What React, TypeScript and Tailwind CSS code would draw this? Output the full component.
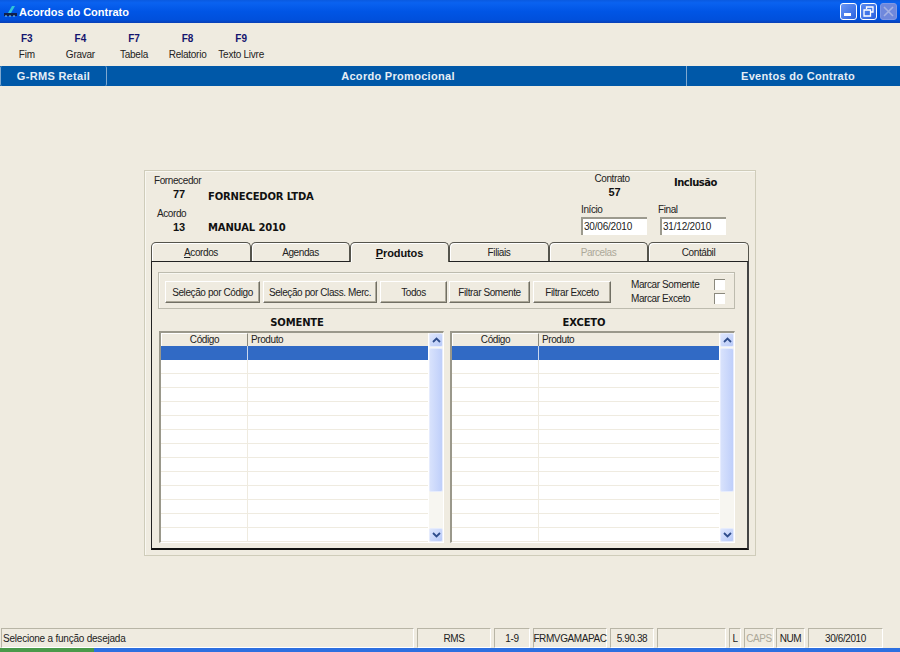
import React from "react";

const font = "font-['Liberation_Sans',Arial,sans-serif]";
const bold = "font-['DejaVu_Sans',sans-serif] font-bold";
const barBold = "font-['Liberation_Sans',Arial,sans-serif] font-bold tracking-[0.3px]";

const keys = [
  ["F3", "Fim"],
  ["F4", "Gravar"],
  ["F7", "Tabela"],
  ["F8", "Relatorio"],
  ["F9", "Texto Livre"],
];

function Btn({ w, label, mr }: { w: string; label: string; mr: string }) {
  return (
    <div
      className={`${w} ${mr} h-[22px] flex items-center justify-center whitespace-nowrap text-[10px] text-[#222] bg-[#efebe0] border border-t-white border-l-white border-r-[#716f64] border-b-[#716f64] shadow-[inset_-1px_-1px_0_#aca899]`}
    >
      {label}
    </div>
  );
}

function Tab({ w, label, active, disabled, u }: { w: string; label: string; active?: boolean; disabled?: boolean; u?: string }) {
  const rest = u ? label.slice(1) : label;
  return (
    <div
      className={`${w} relative z-10 flex items-center justify-center rounded-t-[5px] border-t border-l border-r border-[#55544c] shadow-[inset_1px_1px_0_#ffffff] text-[10px] ${
        active
          ? "h-[20px] -mb-[1px] bg-[#efebe0] font-bold text-[11px] tracking-[-0.1px] text-[#111] pt-[1px]"
          : disabled
          ? "h-[19px] bg-[#efebe0] text-[#aca899]"
          : "h-[19px] bg-[#efebe0] text-[#222]"
      }`}
    >
      {u ? <span className="underline">{u}</span> : null}
      {rest}
    </div>
  );
}

function ListBox({ title, mr, pr }: { title: string; mr: string; pr: string }) {
  const rows = Array.from({ length: 13 });
  return (
    <div className={`w-[285px] ${mr} flex flex-col`}>
      <div className={`h-[18px] ${pr} flex items-center justify-center text-[10px] ${bold} text-[#111] tracking-[-0.15px]`}>{title}</div>
      <div className="h-[212px] border-t-2 border-l-2 border-t-[#9a988b] border-l-[#9a988b] border-r border-b border-r-white border-b-white flex bg-white">
        <div className="w-[269px] flex flex-col">
          <div className="h-[13px] flex bg-[#efebe0] text-[10px] leading-[13px] text-[#222]">
            <div className="w-[87px] text-center border-t border-l border-white border-r border-r-[#8b897d] leading-[12px]">Código</div>
            <div className="flex-1 pl-[3px]">Produto</div>
          </div>
          <div className="h-[14px] flex bg-[#316ac5] shrink-0">
            <div className="w-[87px] border-r border-[#c9d6ee]" />
          </div>
          {rows.map((_, i) => (
            <div key={i} className="h-[14px] shrink-0 flex border-b border-[#efebe0]">
              <div className="w-[87px] border-r border-[#efebe0]" />
            </div>
          ))}
        </div>
        <div className="w-[14px] ml-[1px] flex flex-col bg-[#f7f6f1]">
          <ScrollBtn dir="up" />
          <div className="h-[144px] mt-[1px] bg-[linear-gradient(90deg,#d8e2fc,#bfcffa)] border border-[#e6ecfd] rounded-[2px]" />
          <div className="flex-1" />
          <ScrollBtn dir="down" />
        </div>
      </div>
    </div>
  );
}

function ScrollBtn({ dir }: { dir: "up" | "down" }) {
  return (
    <div className="h-[14px] bg-[linear-gradient(135deg,#dfe7fd,#b7c9f8)] border border-[#e6ecfd] rounded-[2px] flex items-center justify-center">
      <svg width="9" height="6" viewBox="0 0 9 6">
        <path d={dir === "up" ? "M1 5L4.5 1.5L8 5" : "M1 1L4.5 4.5L8 1"} fill="none" stroke="#2f4d8c" strokeWidth="1.8" />
      </svg>
    </div>
  );
}

function Cell({ w, mr, children, cls }: { w: string; mr: string; children?: React.ReactNode; cls?: string }) {
  return (
    <div className={`${w} ${mr} h-[20px] flex items-center justify-center whitespace-nowrap border-t border-l border-[#b8b5a6] border-r border-r-white border-b border-b-white text-[10px] ${cls ?? "text-[#222]"}`}>
      {children}
    </div>
  );
}

export default function App() {
  return (
    <div className={`w-[900px] h-[652px] overflow-hidden flex flex-col bg-[#efebe0] ${font} text-[#222] tracking-[-0.4px]`}>
      {/* title bar */}
      <div className="h-[23px] shrink-0 flex items-center bg-[linear-gradient(180deg,#0a5ae0_0%,#0a62f0_12%,#0055e5_50%,#0050dc_85%,#0a3fb5_100%)]">
        <svg className="ml-[2px]" width="16" height="14" viewBox="0 0 16 14">
          <path d="M6 8L10 1L13 1L9 8Z" fill="#2fc4d8" />
          <rect x="2" y="8" width="13" height="3" fill="#10204a" />
          <path d="M3 11H5M7 11H9M11 11H13" stroke="#8fd0e8" strokeWidth="1" />
        </svg>
        <span className="ml-[1px] pt-[1px] text-[11px] text-white font-bold tracking-normal">Acordos do Contrato</span>
        <div className="ml-auto mr-[3px] flex gap-[3px]">
          <div className="w-[17px] h-[17px] rounded-[3px] border border-white bg-[linear-gradient(135deg,#6a97f5,#2a62e0)] flex items-end pl-[3px] pb-[3px]">
            <div className="w-[7px] h-[3px] bg-white" />
          </div>
          <div className="w-[17px] h-[17px] rounded-[3px] border border-white bg-[linear-gradient(135deg,#5a8af0,#2a62e0)] flex items-center justify-center">
            <svg width="11" height="11" viewBox="0 0 11 11">
              <path d="M3.5 3V1H10V6H7.5M1 4H7.5V10H1Z" fill="none" stroke="#fff" strokeWidth="1.3" />
            </svg>
          </div>
          <div className="w-[17px] h-[17px] rounded-[3px] border border-[#8098e4] bg-[#6f88dc] flex items-center justify-center">
            <svg width="11" height="11" viewBox="0 0 11 11">
              <path d="M1 1L10 10M10 1L1 10" stroke="#a4b2e4" strokeWidth="1.6" />
            </svg>
          </div>
        </div>
      </div>

      {/* toolbar */}
      <div className="h-[43px] shrink-0 flex">
        {keys.map(([k, l]) => (
          <div key={k} className="w-[53.6px] flex flex-col items-center pt-[10px]">
            <div className="text-[10px] leading-[12px] font-bold tracking-normal text-[#14146e]">{k}</div>
            <div className="mt-[4px] text-[10px] leading-[12px] whitespace-nowrap tracking-[-0.25px] text-[#222]">{l}</div>
          </div>
        ))}
      </div>

      {/* blue bar */}
      <div className={`h-[20px] shrink-0 flex bg-[#0058a8] text-[11px] text-[#e6eef6] ${barBold}`}>
        <div className="w-[107px] pt-[1px] flex items-center justify-center border-l border-r border-[#7fa8cf] rounded-[2px]">G-RMS Retail</div>
        <div className="w-[580px] pl-[3px] pt-[1px] flex items-center justify-center border-r border-[#7fa8cf]">Acordo Promocional</div>
        <div className="flex-1 flex items-center justify-center pl-[9px] pt-[1px]">Eventos do Contrato</div>
      </div>

      {/* main */}
      <div className="flex-1 pt-[84px] pl-[144px]">
        <div className="w-[612px] h-[386px] border border-[#cfccba] shadow-[inset_1px_1px_0_#f8f7f1] flex flex-col px-[6px]">
          {/* header */}
          <div className="h-[70px] shrink-0 flex text-[10px]">
            <div className="w-[420px] flex flex-col">
              <div className="mt-[3px] ml-[3px] leading-[13px]">Fornecedor</div>
              <div className="flex mt-[1px] h-[16px] items-center">
                <div className="w-[44px] pl-[22px] mb-[4px] font-bold text-[11px] tracking-normal text-[#111]">77</div>
                <div className={`ml-[13px] text-[10px] ${bold} text-[#111] tracking-[-0.15px]`}>FORNECEDOR LTDA</div>
              </div>
              <div className="mt-[3px] ml-[6px] leading-[13px]">Acordo</div>
              <div className="flex -mt-[1px] h-[16px] items-center">
                <div className="w-[44px] pl-[22px] font-bold text-[11px] tracking-normal text-[#111]">13</div>
                <div className={`ml-[13px] text-[10px] ${bold} text-[#111] tracking-[-0.15px]`}>MANUAL 2010</div>
              </div>
            </div>
            <div className="flex-1 flex flex-col">
              <div className="flex h-[32px]">
                <div className="w-[60px] ml-[11px] flex flex-col items-center mr-[32px] pt-[2px]">
                  <div className="leading-[12px]">Contrato</div>
                  <div className="font-bold text-[11px] tracking-normal leading-[14px] pl-[5px] text-[#111]">57</div>
                </div>
                <div className={`pt-[4px] text-[10px] ${bold} text-[#111] tracking-[-0.5px]`}>Inclusão</div>
              </div>
              <div className="flex">
                <div className="w-[79px] ml-[10px] flex flex-col">
                  <div className="leading-[14px] text-[10px]">Início</div>
                  <div className="w-[66px] h-[18px] bg-white border-t-2 border-l-2 border-[#9c9a8e] pl-[1px] text-[10px] tracking-[-0.2px] leading-[15px]">30/06/2010</div>
                </div>
                <div className="w-[70px] flex flex-col">
                  <div className="-ml-[2px] leading-[14px] text-[10px]">Final</div>
                  <div className="w-[66px] h-[18px] bg-white border-t-2 border-l-2 border-[#9c9a8e] pl-[1px] text-[10px] tracking-[-0.2px] leading-[15px]">31/12/2010</div>
                </div>
              </div>
            </div>
          </div>

          {/* tabs */}
          <div className="flex items-end h-[20px] shrink-0">
            <Tab w="w-[100px]" label="Acordos" u="A" />
            <Tab w="w-[99px]" label="Agendas" />
            <Tab w="w-[99px]" label="Produtos" u="P" active />
            <Tab w="w-[100px]" label="Filiais" />
            <Tab w="w-[99px]" label="Parcelas" disabled />
            <Tab w="w-[101px]" label="Contábil" />
          </div>

          {/* frame */}
          <div className="w-[598px] h-[289px] shrink-0 border-t border-l border-[#222] border-r-2 border-b-2 border-r-[#444] border-b-[#111] pl-[6px] pt-[10px]">
            <div className="w-[577px] h-[37px] border border-[#bdbbae] shadow-[inset_1px_1px_0_#f8f7f1] flex items-center pl-[6px] pt-[3px]">
              <Btn w="w-[95px]" mr="mr-[3px]" label="Seleção por Código" />
              <Btn w="w-[114px]" mr="mr-[3px]" label="Seleção por Class. Merc." />
              <Btn w="w-[67px]" mr="mr-[2px]" label="Todos" />
              <Btn w="w-[81px]" mr="mr-[3px]" label="Filtrar Somente" />
              <Btn w="w-[78px]" mr="mr-[20px]" label="Filtrar Exceto" />
              <div className="flex flex-col mb-[1px] text-[10px]">
                <div className="flex items-center h-[14px]">
                  <span className="w-[83px] whitespace-nowrap">Marcar Somente</span>
                  <span className="w-[11px] h-[11px] bg-white border-t border-l border-[#8b897d]" />
                </div>
                <div className="flex items-center h-[14px]">
                  <span className="w-[83px] whitespace-nowrap">Marcar Exceto</span>
                  <span className="w-[11px] h-[11px] bg-white border-t border-l border-[#8b897d]" />
                </div>
              </div>
            </div>
            <div className="flex mt-[4px] ml-[1px]">
              <ListBox title="SOMENTE" mr="mr-[6px]" pr="pr-[9px]" />
              <ListBox title="EXCETO" mr="" pr="pr-[17px]" />
            </div>
          </div>
        </div>
      </div>

      {/* status bar */}
      <div className="h-[20px] shrink-0 flex pl-[1px] mb-[4px]">
        <Cell w="w-[413px]" mr="mr-[3px]" cls="pl-[1px] text-[#222]">
          <span className="w-full text-left tracking-[-0.22px]">Selecione a função desejada</span>
        </Cell>
        <Cell w="w-[74px]" mr="mr-[3px]">RMS</Cell>
        <Cell w="w-[36px]" mr="mr-[3px]">1-9</Cell>
        <Cell w="w-[74px]" mr="mr-[3px]">FRMVGAMAPAC</Cell>
        <Cell w="w-[44px]" mr="mr-[3px]">5.90.38</Cell>
        <Cell w="w-[69px]" mr="mr-[3px]" />
        <Cell w="w-[12px]" mr="mr-[3px]">L</Cell>
        <Cell w="w-[30px]" mr="mr-[2px]" cls="text-[#aca899]">CAPS</Cell>
        <Cell w="w-[29px]" mr="mr-[3px]">NUM</Cell>
        <Cell w="w-[75px]" mr="">30/6/2010</Cell>
      </div>
      {/* taskbar sliver */}
      <div className="-mt-[4px] h-[4px] shrink-0 flex bg-[#2d6fe0]">
        <div className="w-[94px] bg-[#4a9a4a]" />
      </div>
    </div>
  );
}
